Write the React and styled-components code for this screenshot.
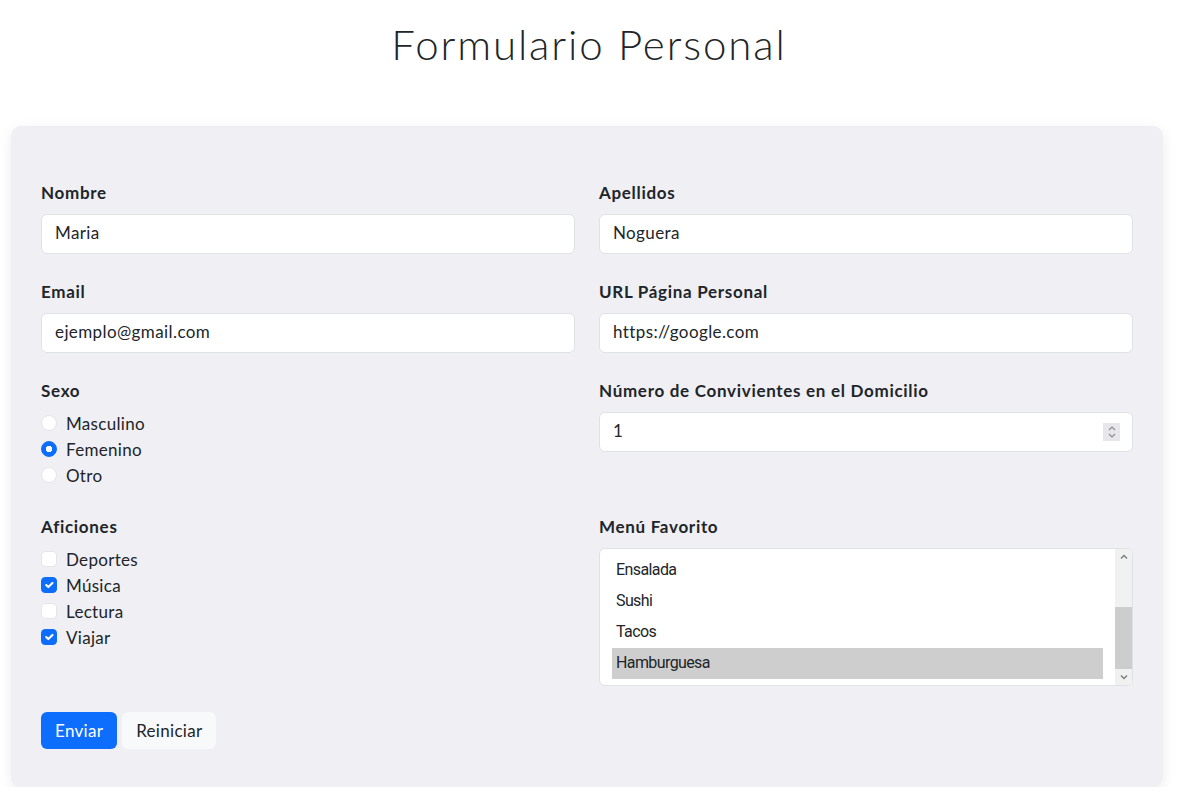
import React, { useEffect, useRef, useState } from "react";
import styled, { createGlobalStyle } from "styled-components";

const GlobalStyle = createGlobalStyle`
  * { box-sizing: border-box; }
  body {
    margin: 0;
    background: #ffffff;
    font-family: Lato, "Open Sans", sans-serif;
    color: #212529;
  }
`;

const menuOptions = ["Paella", "Pizza", "Pasta", "Ensalada", "Sushi", "Tacos", "Hamburguesa"];
const TRACK = 104;

const App = () => {
  const [user, setUser] = useState({
    nombre: "Maria",
    apellidos: "Noguera",
    email: "ejemplo@gmail.com",
    url: "https://google.com",
    sexo: "Femenino",
    convivientes: "1",
    aficiones: ["Música", "Viajar"],
    menu: ["Hamburguesa"],
  });
  const [thumb, setThumb] = useState({ top: 0, height: TRACK });
  const listRef = useRef(null);

  const measure = () => {
    const el = listRef.current;
    if (!el) return;
    const height = Math.max(20, (TRACK * el.clientHeight) / el.scrollHeight);
    const range = el.scrollHeight - el.clientHeight;
    const top = range > 0 ? ((TRACK - height) * el.scrollTop) / range : 0;
    setThumb({ top, height });
  };

  useEffect(() => {
    if (listRef.current) listRef.current.scrollTop = 9999;
    measure();
  }, []);

  const getUserData = (event) => {
    const { name, value } = event.target;
    setUser({ ...user, [name]: value });
  };

  const toggleAficion = (item) => {
    const list = user.aficiones.includes(item)
      ? user.aficiones.filter((a) => a !== item)
      : [...user.aficiones, item];
    setUser({ ...user, aficiones: list });
  };

  const pickMenu = (item) => {
    setUser({ ...user, menu: [item] });
  };

  const scrollBy = (dy) => {
    if (listRef.current) listRef.current.scrollTop += dy;
  };

  return (
    <>
      <GlobalStyle />
      <Title>Formulario Personal</Title>
      <Card onSubmit={(e) => e.preventDefault()}>
        <Grid>
          <Field>
            <Label>Nombre</Label>
            <Input type="text" name="nombre" value={user.nombre} onChange={getUserData} />
          </Field>
          <Field>
            <Label>Apellidos</Label>
            <Input type="text" name="apellidos" value={user.apellidos} onChange={getUserData} />
          </Field>
          <Field>
            <Label>Email</Label>
            <Input type="email" name="email" value={user.email} onChange={getUserData} />
          </Field>
          <Field>
            <Label>URL Página Personal</Label>
            <Input type="url" name="url" value={user.url} onChange={getUserData} />
          </Field>
          <Field>
            <Label>Sexo</Label>
            <ChoiceList>
              {["Masculino", "Femenino", "Otro"].map((s) => (
                <Choice key={s}>
                  <Radio
                    type="radio"
                    name="sexo"
                    value={s}
                    checked={user.sexo === s}
                    onChange={getUserData}
                  />
                  {s}
                </Choice>
              ))}
            </ChoiceList>
          </Field>
          <Field>
            <Label>Número de Convivientes en el Domicilio</Label>
            <NumberWrap>
              <NumberInput
                type="number"
                name="convivientes"
                value={user.convivientes}
                onChange={getUserData}
              />
              <Spinner>
                <svg width="10" height="14" viewBox="0 0 10 14" fill="none">
                  <path d="M2 5 L5 2 L8 5" stroke="#8b8b93" strokeWidth="1.2" />
                  <path d="M2 9 L5 12 L8 9" stroke="#8b8b93" strokeWidth="1.2" />
                </svg>
              </Spinner>
            </NumberWrap>
          </Field>
          <Field>
            <Label>Aficiones</Label>
            <ChoiceList>
              {["Deportes", "Música", "Lectura", "Viajar"].map((a) => (
                <Choice key={a}>
                  <Check
                    type="checkbox"
                    checked={user.aficiones.includes(a)}
                    onChange={() => toggleAficion(a)}
                  />
                  {a}
                </Choice>
              ))}
            </ChoiceList>
          </Field>
          <Field>
            <Label>Menú Favorito</Label>
            <ListBox role="listbox">
              <ListViewport ref={listRef} onScroll={measure}>
                {menuOptions.map((m) => (
                  <ListOption
                    key={m}
                    role="option"
                    selected={user.menu.includes(m)}
                    aria-selected={user.menu.includes(m)}
                    onClick={() => pickMenu(m)}
                  >
                    {m}
                  </ListOption>
                ))}
              </ListViewport>
              <ScrollBar>
                <ScrollArrow onClick={() => scrollBy(-31)}>
                  <svg width="8" height="8" viewBox="0 0 8 8" fill="none">
                    <path d="M1 5.5 L4 2.5 L7 5.5" stroke="#7a7a7a" strokeWidth="1.4" />
                  </svg>
                </ScrollArrow>
                <ScrollTrack>
                  <Thumb style={{ marginTop: thumb.top, height: thumb.height }} />
                </ScrollTrack>
                <ScrollArrow onClick={() => scrollBy(31)}>
                  <svg width="8" height="8" viewBox="0 0 8 8" fill="none">
                    <path d="M1 2.5 L4 5.5 L7 2.5" stroke="#7a7a7a" strokeWidth="1.4" />
                  </svg>
                </ScrollArrow>
              </ScrollBar>
            </ListBox>
          </Field>
        </Grid>
        <Buttons>
          <Button type="submit" primary>
            Enviar
          </Button>
          <Button type="reset">Reiniciar</Button>
        </Buttons>
      </Card>
    </>
  );
};

export default App;

const Title = styled.h1`
  margin: 0;
  padding-top: 19px;
  height: 126px;
  text-align: center;
  font-size: 42px;
  font-weight: 300;
  letter-spacing: 1.9px;
  line-height: 50px;
  color: #212529;
`;

const Card = styled.form`
  margin: 0 15px 0 11px;
  padding: 55px 30px 38px;
  background: #efeff4;
  border-radius: 10px;
  box-shadow: 0 4px 14px rgba(0, 0, 0, 0.08);
`;

const Grid = styled.div`
  display: grid;
  grid-template-columns: 1fr 1fr;
  column-gap: 24px;
  row-gap: 26px;
  align-items: start;
`;

const Field = styled.div`
  display: flex;
  flex-direction: column;
`;

const Label = styled.label`
  font-size: 17px;
  font-weight: 700;
  letter-spacing: 0.7px;
  line-height: 24px;
  margin-bottom: 9px;
`;

const Input = styled.input`
  height: 40px;
  padding: 0 13px 3px;
  font-family: Lato, sans-serif;
  font-size: 17px;
  letter-spacing: 0.4px;
  color: #212529;
  background: #fff;
  border: 1px solid #dee2e6;
  border-radius: 6px;
  outline: none;
`;

const NumberWrap = styled.div`
  position: relative;
  display: flex;
`;

const NumberInput = styled(Input)`
  flex: 1;
  -moz-appearance: textfield;
  &::-webkit-inner-spin-button,
  &::-webkit-outer-spin-button {
    -webkit-appearance: none;
    margin: 0;
  }
`;

const Spinner = styled.span`
  position: absolute;
  right: 13px;
  top: 11px;
  width: 17px;
  height: 18px;
  background: #e6e6eb;
  display: flex;
  align-items: center;
  justify-content: center;
`;

const ChoiceList = styled.div`
  display: flex;
  flex-direction: column;
  margin: -2px 0 1px;
`;

const Choice = styled.label`
  display: flex;
  align-items: center;
  gap: 9px;
  height: 26px;
  font-size: 17px;
  letter-spacing: 0.3px;
`;

const Radio = styled.input`
  appearance: none;
  margin: 0;
  width: 16px;
  height: 16px;
  border-radius: 50%;
  background: #fff;
  border: 1px solid #e4e4ea;
  &:checked {
    border-color: #0d6efd;
    background: radial-gradient(circle, #fff 0 3px, #0d6efd 3.5px);
  }
`;

const Check = styled.input`
  appearance: none;
  margin: 0;
  width: 16px;
  height: 16px;
  border-radius: 4px;
  background: #fff;
  border: 1px solid #e4e4ea;
  &:checked {
    border-color: #0d6efd;
    background-color: #0d6efd;
    background-image: url("data:image/svg+xml,%3csvg xmlns='http://www.w3.org/2000/svg' viewBox='0 0 20 20'%3e%3cpath fill='none' stroke='%23fff' stroke-linecap='round' stroke-linejoin='round' stroke-width='3' d='m6 10 3 3 6-6'/%3e%3c/svg%3e");
    background-size: 100% 100%;
  }
`;

const ListBox = styled.div`
  display: flex;
  height: 138px;
  background: #fff;
  border: 1px solid #dee2e6;
  border-radius: 6px;
  overflow: hidden;
`;

const ListViewport = styled.div`
  flex: 1;
  overflow-y: scroll;
  scrollbar-width: none;
  padding: 6px 12px;
  &::-webkit-scrollbar {
    display: none;
  }
`;

const ListOption = styled.div`
  padding: 5px 4px 7px;
  line-height: 19px;
  font-family: Roboto, "Liberation Sans", sans-serif;
  font-size: 16px;
  letter-spacing: -0.6px;
  color: #212529;
  background: ${(p) => (p.selected ? "#cecece" : "transparent")};
  cursor: default;
`;

const ScrollBar = styled.div`
  width: 17px;
  display: flex;
  flex-direction: column;
  background: #f1f1f1;
`;

const ScrollArrow = styled.div`
  height: 16px;
  display: flex;
  align-items: center;
  justify-content: center;
`;

const ScrollTrack = styled.div`
  flex: 1;
  display: flex;
  flex-direction: column;
`;

const Thumb = styled.div`
  background: #cdcdcd;
`;

const Buttons = styled.div`
  display: flex;
  gap: 5px;
  margin-top: 26px;
`;

const Button = styled.button`
  height: 37px;
  padding: 0 14px;
  font-family: Lato, sans-serif;
  font-size: 17px;
  letter-spacing: 0.3px;
  border: none;
  border-radius: 6px;
  background: ${(p) => (p.primary ? "#0d6efd" : "#f8f9fb")};
  color: ${(p) => (p.primary ? "#fff" : "#212529")};
  cursor: pointer;
`;
